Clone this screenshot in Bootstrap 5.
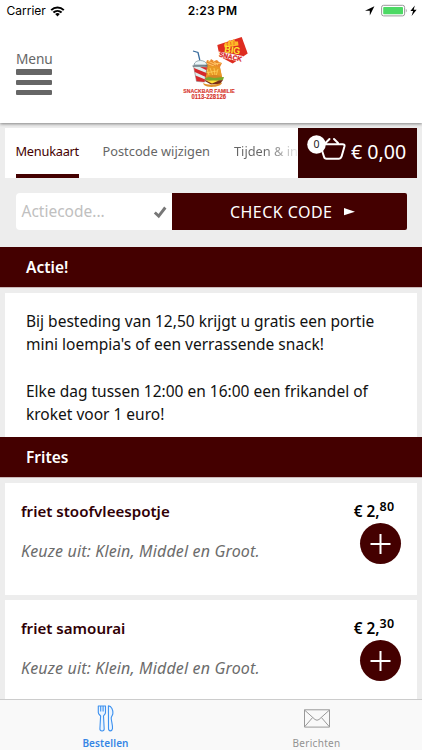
<!DOCTYPE html>
<html lang="nl">
<head>
<meta charset="utf-8">
<meta name="viewport" content="width=device-width, initial-scale=1">
<title>Snackbar Familie</title>
<link href="https://cdn.jsdelivr.net/npm/bootstrap@5.3.0/dist/css/bootstrap.min.css" rel="stylesheet">
<style>
html,body{height:100%;overflow:hidden}
body{background:#ededed;font-family:"Noto Sans","Open Sans",sans-serif;color:#111;font-size:15px}
.app{height:750px}
.t{white-space:nowrap}
.status{height:22px;font-family:Inter,"Liberation Sans",sans-serif;font-size:12px;color:#000}
.status-side{width:166px}
.carrier{margin-left:-1.5px}
.clock{font-weight:600;letter-spacing:.2px;padding-left:3px}
.top{height:123px;background:#fff;box-shadow:0 1px 3px rgba(0,0,0,.45);z-index:2}
.menu-btn{left:16px;top:51px;width:36px;color:#666}
.menu-label{font-size:13.7px;line-height:16px;letter-spacing:-.1px;margin-bottom:2.4px}
.bar{height:5.3px;border-radius:1px;background:#666;margin-bottom:4.9px}
.brand{left:170px;top:25px}
.tabs{height:50px;margin:4.5px 5px 0;background:#fff}
.tab{font-size:12.8px;line-height:46px;color:#666;height:50px}
.tab-on{color:#400;border-bottom:4px solid #400;width:63px;margin-left:10.5px;letter-spacing:-.25px}
.tab-two{margin-left:24px;width:107.5px}
.tab-three{margin-left:24px;width:64px;background:linear-gradient(90deg,#666 50%,#eee);-webkit-background-clip:text;background-clip:text;color:transparent}
.cart{width:119px;background:#380000;color:#fff}
.cart-sum{left:53px;top:10.5px;font-size:19.6px;line-height:28px}
.code-row{height:37px;margin:15.5px 15.5px 16.5px}
.code-in{width:156.5px;border-radius:4px 0 0 4px;color:#c0c0c0;font-size:15.5px;padding:0 5px 0 6px}
.code-btn{background:#400;color:#fff;font-size:16px;letter-spacing:.45px;border-radius:0 2px 2px 0;padding-left:58px;gap:9px}
.sect{height:41px;background:#400;color:#fff;font-weight:600;padding-left:26px;line-height:40px;font-size:15.5px;border-bottom:1px solid #cbb8b8}
.note-box{margin:5px 5px 0;height:144.5px;padding:17.3px 0 0 21px;line-height:23.4px;background:#fff;font-size:15.5px}
.item{margin:5px 5px 0;height:112px;background:#fff;padding:16.6px 16px 0}
.iname{color:#300006;font-weight:600;line-height:22px;font-size:15.1px}
.idesc{margin-top:18px;line-height:22px;font-style:italic;color:#6c6c6c;font-size:16px;letter-spacing:.16px}
.price{color:#000;font-weight:600;line-height:22px;font-size:15.3px;padding-left:1px}
.price sup{font-size:12.5px;top:-.42em;letter-spacing:.5px}
.add{width:41px;height:41px;background:#400;margin:1.4px 0 0 7.3px}
.dock{height:51px;background:#f9f9f9;border-top:1px solid #ccc;font-size:10px;z-index:3}
.dock-l{line-height:12px;letter-spacing:.12px}
.dock-on{color:#3686e5}
.dock-off{color:#929292;letter-spacing:.3px}
</style>
<script src="https://cdn.jsdelivr.net/npm/bootstrap@5.3.0/dist/js/bootstrap.bundle.min.js"></script>
</head>
<body>
<div class="app d-flex flex-column overflow-hidden position-relative">
<header class="top position-relative flex-shrink-0">
 <div class="status d-flex align-items-center justify-content-between">
  <div class="status-side d-flex align-items-center gap-1 t ps-2"><span class="carrier">Carrier</span>
   <svg width="15" height="12" viewBox="0 0 15 12"><g fill="none" stroke="#000" stroke-width="2"><path d="M1.2 5.1a9 9 0 0 1 12.6 0M3.4 7.6a6 6 0 0 1 8.2 0"/></g><path d="M5.2 9a3.5 3.5 0 0 1 4.6 0L7.5 11.4z"/></svg></div>
  <span class="clock t">2:23 PM</span>
  <div class="status-side d-flex justify-content-end">
   <svg width="62" height="22" viewBox="360 0 62 22"><path d="M374.4 6.2 365 10.8h4.8v4.8z"/><rect x="381.6" y="5.3" width="23" height="10.6" rx="2" fill="#fff" stroke="#999"/><rect x="383.2" y="6.9" width="19.8" height="7.4" rx=".8" fill="#4cd964"/><path d="M405.8 8.7c1.2.6 1.2 3.2 0 3.8z" fill="#999"/><path d="M414.8 5.4 410.4 11h2.7l-1.5 5 5-6.3h-2.9z"/></svg></div>
 </div>
 <div class="menu-btn position-absolute"><div class="menu-label t">Menu</div><div class="bar"></div><div class="bar"></div><div class="bar"></div></div>
 <svg class="brand position-absolute" width="90" height="90" viewBox="0 0 90 90">
  <path d="M47.3 20 71.7 12l6 16.500-15 10-13-7z" fill="#de2c20"/>
  <path d="m54 20 1.500-3 2 1 1.500-3 2.500 1 2-2 2 2.500 2.500 0 .5 4-14 2z" fill="#fdb927"/>
  <path d="m57 18 .5 3m3-4 .5 3m3-4 0 4" stroke="#e8541f" stroke-width=".7"/>
  <text x="54" y="27.3" transform="rotate(8 54 27)" font-family="Liberation Sans" font-weight="700" font-size="10" fill="#ffe832" textLength="16" lengthAdjust="spacingAndGlyphs">BIG</text>
  <path d="m48.500 26.500 24.500 4.500-1.500 6-23-5z" fill="#fff"/>
  <text x="48.8" y="31.6" transform="rotate(12 48.8 31.6)" font-family="Liberation Sans" font-weight="700" font-size="6.6" fill="#d81f24" stroke="#d81f24" stroke-width=".3" textLength="23" lengthAdjust="spacingAndGlyphs">SNACK</text>
  <path d="m36 38 1-3 3 1 1-2 3 2 3-1 2 2 3 1-2 4 2 10-12 4-6-8z" fill="#e98a2d"/>
  <path d="m36 38 8 3m-6-5 8 4m-3-4 5 4m3-2-7 1" stroke="#ffc765" stroke-width="1"/>
  <path d="m34 44 4-3 8 0 4 2 2 9-11 4-7-3z" fill="#e99925"/><path d="m37 44 2 6m1-7 3 8m1-8 1 7m3-6-2 7m-11-3 12-2" stroke="#ffd15c" stroke-width=".8"/>
  <path d="M35 54c2-5 16-5 18-1l-2 2H37z" fill="#d88525"/><path d="m33 54 6-2 5 1 10-1-1 3-10 2z" fill="#79a92c"/>
  <path d="m33 55 10 1 10-1-3 4-9 .5z" fill="#792d18"/><path d="m36 55.5 6 3 7-3z" fill="#ffdd36"/><path d="M33 58c5 2.5 14 2 19-.5 0 4.5-14 6-18 2.5z" fill="#df902b"/>
  <path d="m23.5 41 13.7.2L34.5 57l-8-.6z" fill="#ddeeee" stroke="#765656" stroke-width=".5"/>
  <path d="m24 43 12.5 5-.7 4-11-5zm1.500 7.500 9.700 4-1 2.500-7.700-1zM30 42l7 .2-.5 3z" fill="#d6282b"/>
  <path d="M24 40c.5-6 12-6 13 0z" fill="#ecf6f9" stroke="#718a94" stroke-width=".7"/><path d="m22.5 41 15-.1" stroke="#516a76" stroke-width="1.2"/>
  <path d="m23 26 5 1.5 1.8 7.5" fill="none" stroke="#376b9d" stroke-width="1.3"/>
  <g font-family="Liberation Sans" font-weight="700" fill="#d63229" stroke="#d63229" stroke-width=".12"><text x="13.3" y="67.6" font-size="6" textLength="51.5" lengthAdjust="spacingAndGlyphs">SNACKBAR FAMILIE</text><text x="21.5" y="74.4" font-size="6.6" textLength="34.5" lengthAdjust="spacingAndGlyphs">0113-228126</text></g>
 </svg>
</header>
<nav class="tabs d-flex flex-shrink-0">
 <span class="tab tab-on t">Menukaart</span><span class="tab tab-two t">Postcode wijzigen</span><span class="tab tab-three t">Tijden &amp; in</span>
 <div class="cart ms-auto position-relative"><svg class="d-block" width="119" height="50" viewBox="298 127 119 50"><g fill="none" stroke="#fff" stroke-width="2" stroke-linejoin="round" stroke-linecap="round"><path d="M320 143.2h22.5q2.5 0 2 2l-3 10.500q-.7 2-2.500 2h-12.500q-2 0-2.500-2l-4-12.500M325.500 142l4-4m8.500 4-4-4"/></g><circle cx="316.5" cy="143.5" r="9.3" fill="#fff"/><text x="316.5" y="147.2" text-anchor="middle" font-size="10.5" fill="#222" font-family="Noto Sans">0</text></svg><span class="cart-sum position-absolute t">€ 0,00</span></div>
</nav>
<div class="code-row d-flex flex-shrink-0">
 <div class="code-in bg-white d-flex align-items-center justify-content-between"><span class="t">Actiecode...</span><svg width="14" height="14" viewBox="0 0 14 14"><path d="m1.800 7.5 3.900 3.600L12.300 2.500" fill="none" stroke="#777" stroke-width="2.900"/></svg></div>
 <div class="code-btn flex-grow-1 d-flex align-items-center"><span class="t">CHECK CODE</span><svg width="16" height="10" viewBox="0 0 16 10"><path d="m3 1 11 3.700L3 8.300z" fill="#fff"/></svg></div>
</div>
<div class="sect flex-shrink-0">Actie!</div>
<div class="note-box flex-shrink-0"><div class="t">Bij besteding van 12,50 krijgt u gratis een portie</div><div class="t">mini loempia's of een verrassende snack!</div><br><div class="t">Elke dag tussen 12:00 en 16:00 een frikandel of</div><div class="t">kroket voor 1 euro!</div></div>
<div class="sect flex-shrink-0">Frites</div>
<div class="item d-flex justify-content-between flex-shrink-0"><div><div class="iname t">friet stoofvleespotje</div><div class="idesc t">Keuze uit: Klein, Middel en Groot.</div></div><div><div class="price t">€ 2,<sup>80</sup></div><div class="add rounded-circle"><svg class="d-block" width="41" height="41"><path d="M10.5 21h20M20.5 11v20" stroke="#fff" stroke-width="2"/></svg></div></div></div>
<div class="item d-flex justify-content-between flex-shrink-0"><div><div class="iname t">friet samourai</div><div class="idesc t">Keuze uit: Klein, Middel en Groot.</div></div><div><div class="price t">€ 2,<sup>30</sup></div><div class="add rounded-circle"><svg class="d-block" width="41" height="41"><path d="M10.5 21h20M20.5 11v20" stroke="#fff" stroke-width="2"/></svg></div></div></div>
<footer class="dock position-absolute bottom-0 start-0 end-0 d-flex text-center">
 <div class="w-50"><svg class="d-block mx-auto" width="22" height="37" viewBox="95 700.5 22 37"><g fill="#eaf4ff" stroke="#3d91ef" stroke-width="1.1" stroke-linejoin="round"><path d="M98.3 706.5h7.2v6.5c0 1.8-1.5 2.4-2 3.5l.7 13c0 2.6-4.3 2.6-4.3 0l.7-13c-.7-1.1-2.3-1.7-2.3-3.5zM100.7 706.5v5.5m2.4-5.5v5.5"/><path d="M108.400 706.400c3.300 0 4.600 4.500 4.500 7.300 0 2-1.700 3.300-1.700 4.700 0 3 1.800 8 1.300 10.700-.5 3-4 3-4 0z"/></g></svg><div class="dock-l dock-on fw-semibold t">Bestellen</div></div>
 <div class="w-50"><svg class="d-block mx-auto" width="28" height="37" viewBox="302 700.5 28 37"><path d="M303.5 710.3h25v17.3h-25zM303.5 710.500l8.200 7.400 2.300 2.100q2 1.500 4 0l2.300-2.100 8.200-7.400M303.500 727.400l8.200-9.500m16.800 9.500-8.200-9.500" fill="none" stroke="#999"/></svg><div class="dock-l dock-off t">Berichten</div></div>
</footer>
</div>
</body>
</html>
